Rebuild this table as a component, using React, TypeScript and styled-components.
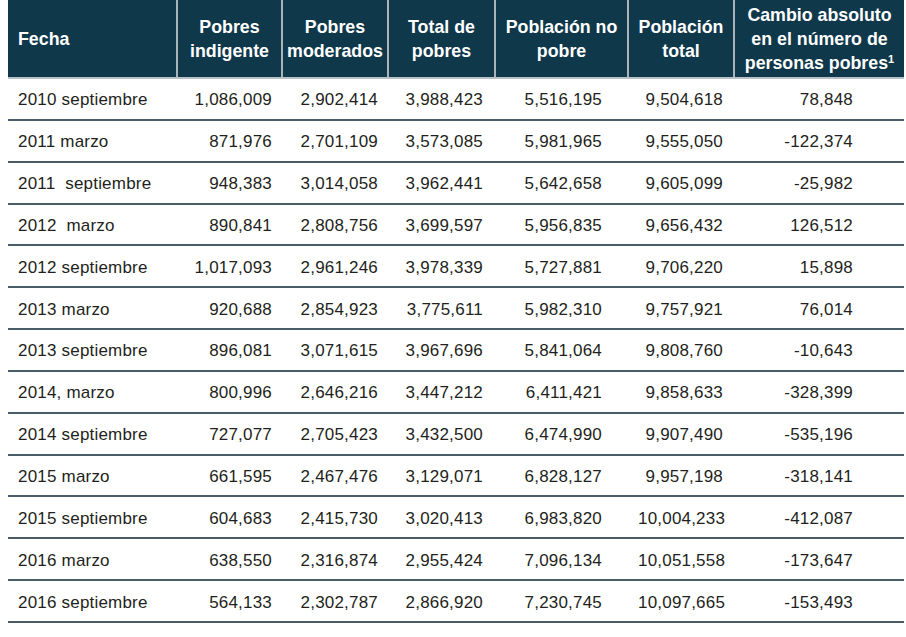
import React from "react";
import styled, { createGlobalStyle } from "styled-components";

const Global = createGlobalStyle`
  html, body { margin: 0; padding: 0; background: #ffffff; }
  body { padding: 0 8px; font-family: "Liberation Sans", Arial, sans-serif; }
`;

const Table = styled.table`
  width: 896px;
  border-collapse: collapse;
  table-layout: fixed;
  font-family: "Liberation Sans", Arial, sans-serif;
`;

const HeadCell = styled.th<{ $align?: "left" | "center"; $w: number }>`
  width: ${(p) => p.$w}px;
  height: 78px;
  padding: 3px ${(p) => (p.$align === "left" ? "10px" : "2px")} 0;
  box-sizing: border-box;
  background: #10384b;
  color: #ffffff;
  font-weight: 700;
  font-size: 17.8px;
  line-height: 23.8px;
  text-align: ${(p) => p.$align ?? "center"};
  vertical-align: middle;
  border-left: 2px solid #a9b3b9;
  border-bottom: 2px solid #b9c1c6;
  &:first-child { border-left: none; }
  sup { font-size: 11px; line-height: 0; vertical-align: 6px; }
`;

const Row = styled.tr`
  height: 41.85px;
  border-bottom: 2px solid #4a5c68;
`;

const Cell = styled.td<{ $align?: "left" | "right"; $pr?: number }>`
  padding: 3px ${(p) => p.$pr ?? 10}px 0 10px;
  box-sizing: border-box;
  font-size: 17px;
  color: #231f20;
  text-align: ${(p) => p.$align ?? "right"};
  vertical-align: middle;
  white-space: nowrap;
  letter-spacing: 0.2px;
`;

const cols = [
  { label: ["Fecha"], w: 169, align: "left" as const },
  { label: ["Pobres", "indigente"], w: 105 },
  { label: ["Pobres", "moderados"], w: 106 },
  { label: ["Total de", "pobres"], w: 107 },
  { label: ["Población no", "pobre"], w: 133 },
  { label: ["Población", "total"], w: 106 },
  { label: ["Cambio absoluto", "en el número de", "personas pobres"], w: 170, sup: "1" },
];

const padRight = [10, 10, 10, 12, 26, 11, 51];

const rows: string[][] = [
  ["2010 septiembre", "1,086,009", "2,902,414", "3,988,423", "5,516,195", "9,504,618", "78,848"],
  ["2011 marzo", "871,976", "2,701,109", "3,573,085", "5,981,965", "9,555,050", "-122,374"],
  ["2011  septiembre", "948,383", "3,014,058", "3,962,441", "5,642,658", "9,605,099", "-25,982"],
  ["2012  marzo", "890,841", "2,808,756", "3,699,597", "5,956,835", "9,656,432", "126,512"],
  ["2012 septiembre", "1,017,093", "2,961,246", "3,978,339", "5,727,881", "9,706,220", "15,898"],
  ["2013 marzo", "920,688", "2,854,923", "3,775,611", "5,982,310", "9,757,921", "76,014"],
  ["2013 septiembre", "896,081", "3,071,615", "3,967,696", "5,841,064", "9,808,760", "-10,643"],
  ["2014, marzo", "800,996", "2,646,216", "3,447,212", "6,411,421", "9,858,633", "-328,399"],
  ["2014 septiembre", "727,077", "2,705,423", "3,432,500", "6,474,990", "9,907,490", "-535,196"],
  ["2015 marzo", "661,595", "2,467,476", "3,129,071", "6,828,127", "9,957,198", "-318,141"],
  ["2015 septiembre", "604,683", "2,415,730", "3,020,413", "6,983,820", "10,004,233", "-412,087"],
  ["2016 marzo", "638,550", "2,316,874", "2,955,424", "7,096,134", "10,051,558", "-173,647"],
  ["2016 septiembre", "564,133", "2,302,787", "2,866,920", "7,230,745", "10,097,665", "-153,493"],
];

const DateText = styled.span`
  white-space: pre;
`;

export default function App() {
  return (
    <>
      <Global />
      <Table>
        <thead>
          <tr>
            {cols.map((c, i) => (
              <HeadCell key={i} $w={c.w} $align={c.align ?? "center"}>
                {c.label.map((l, j) => (
                  <React.Fragment key={j}>
                    {j > 0 && <br />}
                    {l}
                    {c.sup && j === c.label.length - 1 && <sup>{c.sup}</sup>}
                  </React.Fragment>
                ))}
              </HeadCell>
            ))}
          </tr>
        </thead>
        <tbody>
          {rows.map((r, i) => (
            <Row key={i}>
              {r.map((v, j) =>
                j === 0 ? (
                  <Cell key={j} $align="left">
                    <DateText>{v}</DateText>
                  </Cell>
                ) : (
                  <Cell key={j} $pr={padRight[j]}>
                    {v}
                  </Cell>
                )
              )}
            </Row>
          ))}
        </tbody>
      </Table>
    </>
  );
}
